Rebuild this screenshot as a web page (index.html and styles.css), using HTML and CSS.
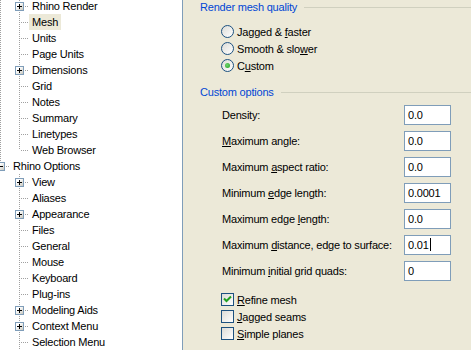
FILE: index.html
```html
<!DOCTYPE html>
<html lang="en">
<head>
  <meta charset="UTF-8" />
  <title>Mesh Options</title>
  <link rel="stylesheet" href="styles.css">
</head>
<body>
  <div class="window">

    <div class="tree">
      <div class="tree-inner">
        <div class="row"><span class="g line"></span><span class="g tee"><i class="exp plus"></i></span><span class="label">Rhino Render</span></div>
        <div class="row"><span class="g line"></span><span class="g tee"></span><span class="label selected">Mesh</span></div>
        <div class="row"><span class="g line"></span><span class="g tee"></span><span class="label">Units</span></div>
        <div class="row"><span class="g line"></span><span class="g tee"></span><span class="label">Page Units</span></div>
        <div class="row"><span class="g line"></span><span class="g tee"><i class="exp plus"></i></span><span class="label">Dimensions</span></div>
        <div class="row"><span class="g line"></span><span class="g tee"></span><span class="label">Grid</span></div>
        <div class="row"><span class="g line"></span><span class="g tee"></span><span class="label">Notes</span></div>
        <div class="row"><span class="g line"></span><span class="g tee"></span><span class="label">Summary</span></div>
        <div class="row"><span class="g line"></span><span class="g tee"></span><span class="label">Linetypes</span></div>
        <div class="row"><span class="g line"></span><span class="g corner"></span><span class="label">Web Browser</span></div>
        <div class="row"><span class="g corner"><i class="exp"></i></span><span class="label">Rhino Options</span></div>
        <div class="row"><span class="g"></span><span class="g tee"><i class="exp plus"></i></span><span class="label">View</span></div>
        <div class="row"><span class="g"></span><span class="g tee"></span><span class="label">Aliases</span></div>
        <div class="row"><span class="g"></span><span class="g tee"><i class="exp plus"></i></span><span class="label">Appearance</span></div>
        <div class="row"><span class="g"></span><span class="g tee"></span><span class="label">Files</span></div>
        <div class="row"><span class="g"></span><span class="g tee"></span><span class="label">General</span></div>
        <div class="row"><span class="g"></span><span class="g tee"></span><span class="label">Mouse</span></div>
        <div class="row"><span class="g"></span><span class="g tee"></span><span class="label">Keyboard</span></div>
        <div class="row"><span class="g"></span><span class="g tee"></span><span class="label">Plug-ins</span></div>
        <div class="row"><span class="g"></span><span class="g tee"><i class="exp plus"></i></span><span class="label">Modeling Aids</span></div>
        <div class="row"><span class="g"></span><span class="g tee"><i class="exp plus"></i></span><span class="label">Context Menu</span></div>
        <div class="row"><span class="g"></span><span class="g tee"></span><span class="label">Selection Menu</span></div>
      </div>
    </div>

    <div class="panel">
      <div class="group-title">Render mesh quality</div>
      <div class="choices">
        <div class="choice"><span class="radio"></span><span>Jagged &amp; <u>f</u>aster</span></div>
        <div class="choice"><span class="radio"></span><span>Smooth &amp; slo<u>w</u>er</span></div>
        <div class="choice"><span class="radio on"></span><span>C<u>u</u>stom</span></div>
      </div>

      <div class="group-title second">Custom options</div>
      <div class="fields">
        <span>Density:</span><span class="field">0.0</span>
        <span><u>M</u>aximum angle:</span><span class="field">0.0</span>
        <span>Maximum <u>a</u>spect ratio:</span><span class="field">0.0</span>
        <span>Minimum <u>e</u>dge length:</span><span class="field">0.0001</span>
        <span>Maximum edge <u>l</u>ength:</span><span class="field">0.0</span>
        <span>Maximum <u>d</u>istance, edge to surface:</span><span class="field">0.01<i class="caret"></i></span>
        <span>Minimum <u>i</u>nitial grid quads:</span><span class="field">0</span>
      </div>

      <div class="choices checks">
        <div class="choice"><span class="check on">
          <svg width="11" height="11" viewBox="0 0 11 11"><path d="M2 4.5 L4.5 7 L9 2.5" fill="none" stroke="#21a121" stroke-width="2"/></svg>
        </span><span><u>R</u>efine mesh</span></div>
        <div class="choice"><span class="check"></span><span><u>J</u>agged seams</span></div>
        <div class="choice"><span class="check"></span><span><u>S</u>imple planes</span></div>
      </div>
    </div>

  </div>
</body>
</html>
```

FILE: styles.css
```css
body {
  margin: 0;
  font-family: "Liberation Sans", Arial, sans-serif;
  font-size: 11px;
  letter-spacing: -0.2px;
  color: #000;
  overflow: hidden;
}

u {
  text-decoration: underline;
  text-underline-offset: 1px;
}

.window {
  display: flex;
  width: 471px;
  height: 350px;
}

/* tree */

.tree {
  width: 182px;
  flex: none;
  background: #fff;
  border-right: 1px solid #7f9db9;
  overflow: hidden;
}

.tree-inner {
  margin: -2px 0 0 -9px;
}

.row {
  display: flex;
  height: 16px;
  white-space: nowrap;
}

.g {
  width: 19px;
  flex: none;
  position: relative;
}

.g.line::before,
.g.tee::before,
.g.corner::before {
  content: "";
  position: absolute;
  left: 9px;
  top: 0;
  bottom: 0;
  width: 1px;
  background: repeating-linear-gradient(to bottom, #a0a0a0 0 1px, transparent 1px 2px);
}

.g.corner::before {
  bottom: 8px;
}

.g.tee::after,
.g.corner::after {
  content: "";
  position: absolute;
  left: 11px;
  top: 8px;
  width: 8px;
  height: 1px;
  background: repeating-linear-gradient(to right, #a0a0a0 0 1px, transparent 1px 2px);
}

.exp {
  position: absolute;
  left: 5px;
  top: 4px;
  width: 9px;
  height: 9px;
  box-sizing: border-box;
  border: 1px solid #7f9db9;
  background: linear-gradient(135deg, #fff 30%, #c8c6bc);
  z-index: 1;
}

.exp::before,
.exp::after {
  content: "";
  position: absolute;
  background: #000;
}

.exp::before {
  left: 1px;
  top: 3px;
  width: 5px;
  height: 1px;
}

.exp.plus::after {
  left: 3px;
  top: 1px;
  width: 1px;
  height: 5px;
}

.label {
  padding: 0 3px;
  line-height: 16px;
}

.label.selected {
  background: #ece9d8;
}

/* options panel */

.panel {
  flex: 1;
  background: #ece9d8;
  padding-left: 17px;
  overflow: hidden;
}

.group-title {
  display: flex;
  align-items: center;
  height: 14px;
  color: #0046d5;
  white-space: nowrap;
}

.group-title::after {
  content: "";
  flex: 1;
  height: 0;
  border-top: 1px solid #d0d0bf;
  margin-left: 7px;
}

.group-title.second {
  margin-top: 11px;
}

.choices {
  display: flex;
  flex-direction: column;
  margin: 9px 0 0 21px;
}

.choice {
  display: flex;
  align-items: center;
  gap: 3px;
  height: 17px;
  white-space: nowrap;
}

.radio,
.check {
  width: 13px;
  height: 13px;
  flex: none;
  box-sizing: border-box;
  border: 1px solid #1c5180;
  background: linear-gradient(135deg, #dcdcd7, #fff);
  display: flex;
  align-items: center;
  justify-content: center;
}

.radio {
  border-radius: 50%;
}

.radio.on::after {
  content: "";
  width: 5px;
  height: 5px;
  border-radius: 50%;
  background: radial-gradient(circle at 40% 40%, #6fd46f, #21a121);
}

.fields {
  display: grid;
  grid-template-columns: 182px 47px;
  row-gap: 6px;
  align-items: center;
  margin: 6px 0 0 22px;
}

.field {
  height: 20px;
  box-sizing: border-box;
  border: 1px solid #7f9db9;
  background: #fff;
  padding-left: 3px;
  line-height: 18px;
  white-space: nowrap;
}

.caret {
  display: inline-block;
  width: 1px;
  height: 13px;
  background: #000;
  vertical-align: -2px;
  margin-left: 1px;
}

.checks {
  margin-top: 10px;
}
```
